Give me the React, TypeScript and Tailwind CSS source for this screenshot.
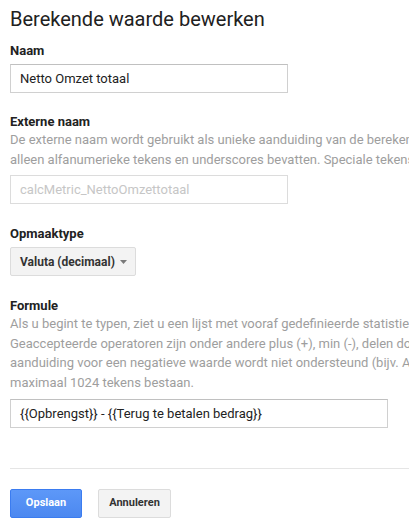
import React from "react";

const roboto = { fontFamily: "Roboto, 'Liberation Sans', Arial, sans-serif" };

function Label({ children }: { children: React.ReactNode }) {
  return (
    <div className="text-[13px] leading-[16px] font-bold text-[#222222] whitespace-nowrap">
      {children}
    </div>
  );
}

function Desc({ lines }: { lines: string[] }) {
  return (
    <div className="text-[13px] leading-[19.5px] text-[#9e9e9e]">
      {lines.map((l, i) => (
        <div key={i} className="whitespace-nowrap">
          {l}
        </div>
      ))}
    </div>
  );
}

export default function App() {
  return (
    <div
      className="w-full h-[531px] overflow-hidden bg-white text-[#222222]"
      style={roboto}
    >
      <div className="pl-[10px] pt-[7px]">
        <div className="text-[20px] leading-[24px] text-[#212121] whitespace-nowrap">
          Berekende waarde bewerken
        </div>

        <div className="mt-[12px]">
          <Label>Naam</Label>
          <div className="mt-[5px] w-[278px] h-[29px] border border-[#d0d0d0] border-t-[#c0c0c0] flex items-center pl-[9px] text-[13px] text-[#222222]">
            Netto Omzet totaal
          </div>
        </div>

        <div className="mt-[21px]">
          <Label>Externe naam</Label>
          <Desc
            lines={[
              "De externe naam wordt gebruikt als unieke aanduiding van de berekende statistiek. De externe naam mag",
              "alleen alfanumerieke tekens en underscores bevatten. Speciale tekens en spaties zijn niet toegestaan.",
            ]}
          />
          <div className="mt-[6px] w-[278px] h-[29px] border border-[#dcdcdc] flex items-center pl-[9px] text-[13px] text-[#c6c6c6]">
            calcMetric_NettoOmzettotaal
          </div>
        </div>

        <div className="mt-[22px]">
          <Label>Opmaaktype</Label>
          <div className="mt-[5px] w-[126px] h-[29px] rounded-[2px] border border-[#dcdcdc] bg-[#f3f3f3] flex items-center pl-[9px] pr-[8px] justify-between">
            <span className="text-[12px] font-bold text-[#333333] whitespace-nowrap">
              Valuta (decimaal)
            </span>
            <svg width="7" height="4" viewBox="0 0 7 4" className="mt-[1px]">
              <path d="M0 0 L7 0 L3.5 4 Z" fill="#7a7a7a" />
            </svg>
          </div>
        </div>

        <div className="mt-[22px]">
          <Label>Formule</Label>
          <Desc
            lines={[
              "Als u begint te typen, ziet u een lijst met vooraf gedefinieerde statistieken die u kunt gebruiken.",
              "Geaccepteerde operatoren zijn onder andere plus (+), min (-), delen door (/) en vermenigvuldigen (*). De",
              "aanduiding voor een negatieve waarde wordt niet ondersteund (bijv. A - B werkt, -A niet). Formules mogen uit",
              "maximaal 1024 tekens bestaan.",
            ]}
          />
          <div className="mt-[7px] w-[378px] h-[29px] border border-[#d0d0d0] border-t-[#c0c0c0] flex items-center pl-[9px] text-[13px] text-[#222222] whitespace-nowrap">
            {"{{Opbrengst}} - {{Terug te betalen bedrag}}"}
          </div>
        </div>

        <div className="mt-[40px] h-px bg-[#e5e5e5]" />

        <div className="mt-[20px] flex gap-[16px]">
          <button className="w-[72px] h-[29px] rounded-[2px] border border-[#3b7cf0] bg-gradient-to-b from-[#5d98f8] to-[#4c88f0] text-white text-[11px] font-bold">
            Opslaan
          </button>
          <button className="w-[73px] h-[29px] rounded-[2px] border border-[#dcdcdc] bg-[#f3f3f3] text-[#333333] text-[11px] font-bold">
            Annuleren
          </button>
        </div>
      </div>
    </div>
  );
}
